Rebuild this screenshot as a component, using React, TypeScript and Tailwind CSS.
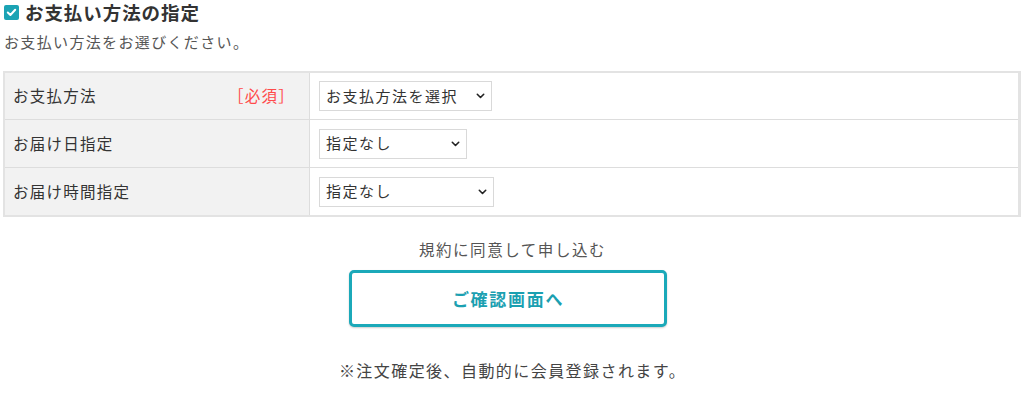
import React from "react";

const font = { fontFamily: '"Noto Sans CJK JP", "Noto Sans", sans-serif' };

function Chevron() {
  return (
    <svg width="9" height="6" viewBox="0 0 9 6" className="shrink-0">
      <path d="M1.3 1.3 L4.5 4.5 L7.7 1.3" fill="none" stroke="#222" strokeWidth="1.6" strokeLinecap="round" strokeLinejoin="round" />
    </svg>
  );
}

function Select({ label, w }: { label: string; w: string }) {
  return (
    <div className={`flex h-[30px] items-center justify-between border border-[#d9d9d9] bg-white pl-[6px] pr-[6px] ${w}`}>
      <span className="text-[15px] tracking-[0.1em] text-[#333]">{label}</span>
      <Chevron />
    </div>
  );
}

function Row({ label, required, sel, w, h, last }: { label: string; required?: boolean; sel: string; w: string; h: string; last?: boolean }) {
  return (
    <div className={`flex ${h} ${last ? "" : "border-b border-[#dddddd]"}`}>
      <div className="flex w-[305px] shrink-0 items-center justify-between border-r border-[#dddddd] bg-[#f2f2f2] pl-[8px] pr-[14px]">
        <span className="text-[15.5px] tracking-[0.08em] text-[#333]">{label}</span>
        {required && <span className="text-[15.5px] tracking-[0.08em] text-[#ff4a4a]">［必須］</span>}
      </div>
      <div className="flex flex-1 items-center pl-[9px]">
        <Select label={sel} w={w} />
      </div>
    </div>
  );
}

export default function App() {
  return (
    <div className="h-[393px] w-[1024px] overflow-hidden bg-white" style={font}>
      <div className="flex items-center pl-[4px] pt-[1px]">
        <div className="flex h-[15px] w-[15px] items-center justify-center rounded-[2px] bg-[#1ba3b4]">
          <svg width="11" height="9" viewBox="0 0 11 9">
            <path d="M1.8 4.5 L4.4 7 L9.2 1.8" fill="none" stroke="white" strokeWidth="2" strokeLinecap="round" strokeLinejoin="round" />
          </svg>
        </div>
        <span className="ml-[6px] text-[18.5px] font-bold leading-[23px] tracking-[0.05em] text-[#333]">お支払い方法の指定</span>
      </div>
      <div className="mt-[8px] pl-[4px] text-[15px] leading-[20px] tracking-[0.09em] text-[#555]">お支払い方法をお選びください。</div>
      <div className="ml-[3px] mt-[19px] w-[1018px] border-2 border-[#e3e3e3] border-r-[3px]">
        <Row label="お支払方法" required sel="お支払方法を選択" w="w-[173px]" h="h-[47px]" />
        <Row label="お届け日指定" sel="指定なし" w="w-[148px]" h="h-[48px]" />
        <Row label="お届け時間指定" sel="指定なし" w="w-[175px]" h="h-[47px]" last />
      </div>
      <div className="mt-[21px] flex flex-col items-center">
        <div className="ml-[1px] text-[15.5px] leading-[22px] tracking-[0.1em] text-[#555]">規約に同意して申し込む</div>
        <div className="mt-[10px] ml-[-8px] flex h-[57px] w-[318px] items-center justify-center rounded-[5px] border-[3px] border-[#1ba9b9] bg-white shadow-[0_1px_2px_rgba(0,0,0,0.2)]">
          <span className="text-[17px] font-bold tracking-[0.1em] text-[#1ba0b1]">ご確認画面へ</span>
        </div>
        <div className="mt-[32px] ml-[1px] text-[16px] leading-[22px] tracking-[0.09em] text-[#444]">※注文確定後、自動的に会員登録されます。</div>
      </div>
    </div>
  );
}
